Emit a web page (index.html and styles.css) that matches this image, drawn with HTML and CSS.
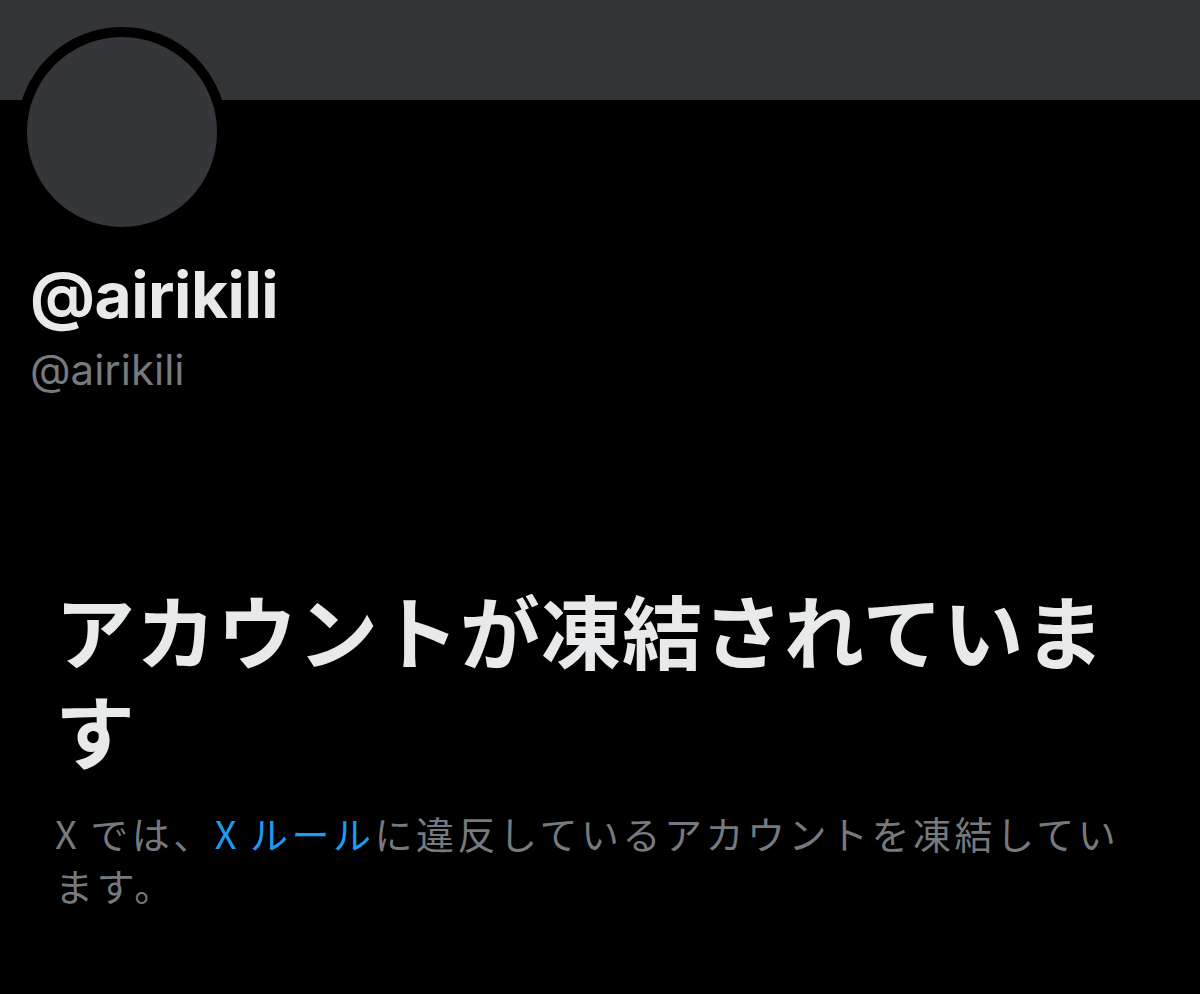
FILE: index.html
```html
<!DOCTYPE html>
<html lang="ja">
<head>
<meta charset="utf-8">
<title>@airikili</title>
<link rel="stylesheet" href="styles.css">
</head>
<body>
<div class="page">
  <div class="banner"></div>
  <div class="avatar"></div>
  <div class="profile">
    <div class="name">@airikili</div>
    <div class="handle">@airikili</div>
  </div>
  <div class="notice">
    <h1 class="title">アカウントが凍結されています</h1>
    <p class="desc">X では、<a class="link" href="#">X ルール</a>に違反しているアカウントを凍結しています。</p>
  </div>
</div>
</body>
</html>
```

FILE: styles.css
```css
html, body {
  margin: 0;
  padding: 0;
  background: #000;
}
.page {
  width: 1200px;
  height: 994px;
  overflow: hidden;
  background: #000;
  font-family: "Inter", "Noto Sans CJK JP", sans-serif;
}
.banner {
  height: 100px;
  background: #333438;
}
.avatar {
  width: 190px;
  height: 190px;
  margin: -73px 0 0 17px;
  border: 10px solid #000;
  border-radius: 50%;
  background: #35363a;
}
.profile {
  padding-left: 30px;
}
.name {
  margin-top: 20px;
  font-size: 64px;
  font-weight: 700;
  line-height: 1.2;
  color: #e7e9ea;
  letter-spacing: -0.5px;
}
.handle {
  margin-top: 9px;
  font-size: 42px;
  line-height: 1.3;
  color: #76797e;
}
.notice {
  padding: 0 50px 0 55px;
  margin-top: 181px;
}
.title {
  margin: 0;
  font-family: "Noto Sans CJK JP", sans-serif;
  font-size: 80px;
  font-weight: 700;
  line-height: 100px;
  letter-spacing: 1px;
  color: #e7e9ea;
}
.desc {
  margin: 29px 0 0;
  font-family: "Noto Sans CJK JP", sans-serif;
  font-size: 38px;
  line-height: 52px;
  letter-spacing: 3.5px;
  word-spacing: -2px;
  color: #76797e;
}
.link {
  color: #1d9bf0;
  text-decoration: none;
}
```
